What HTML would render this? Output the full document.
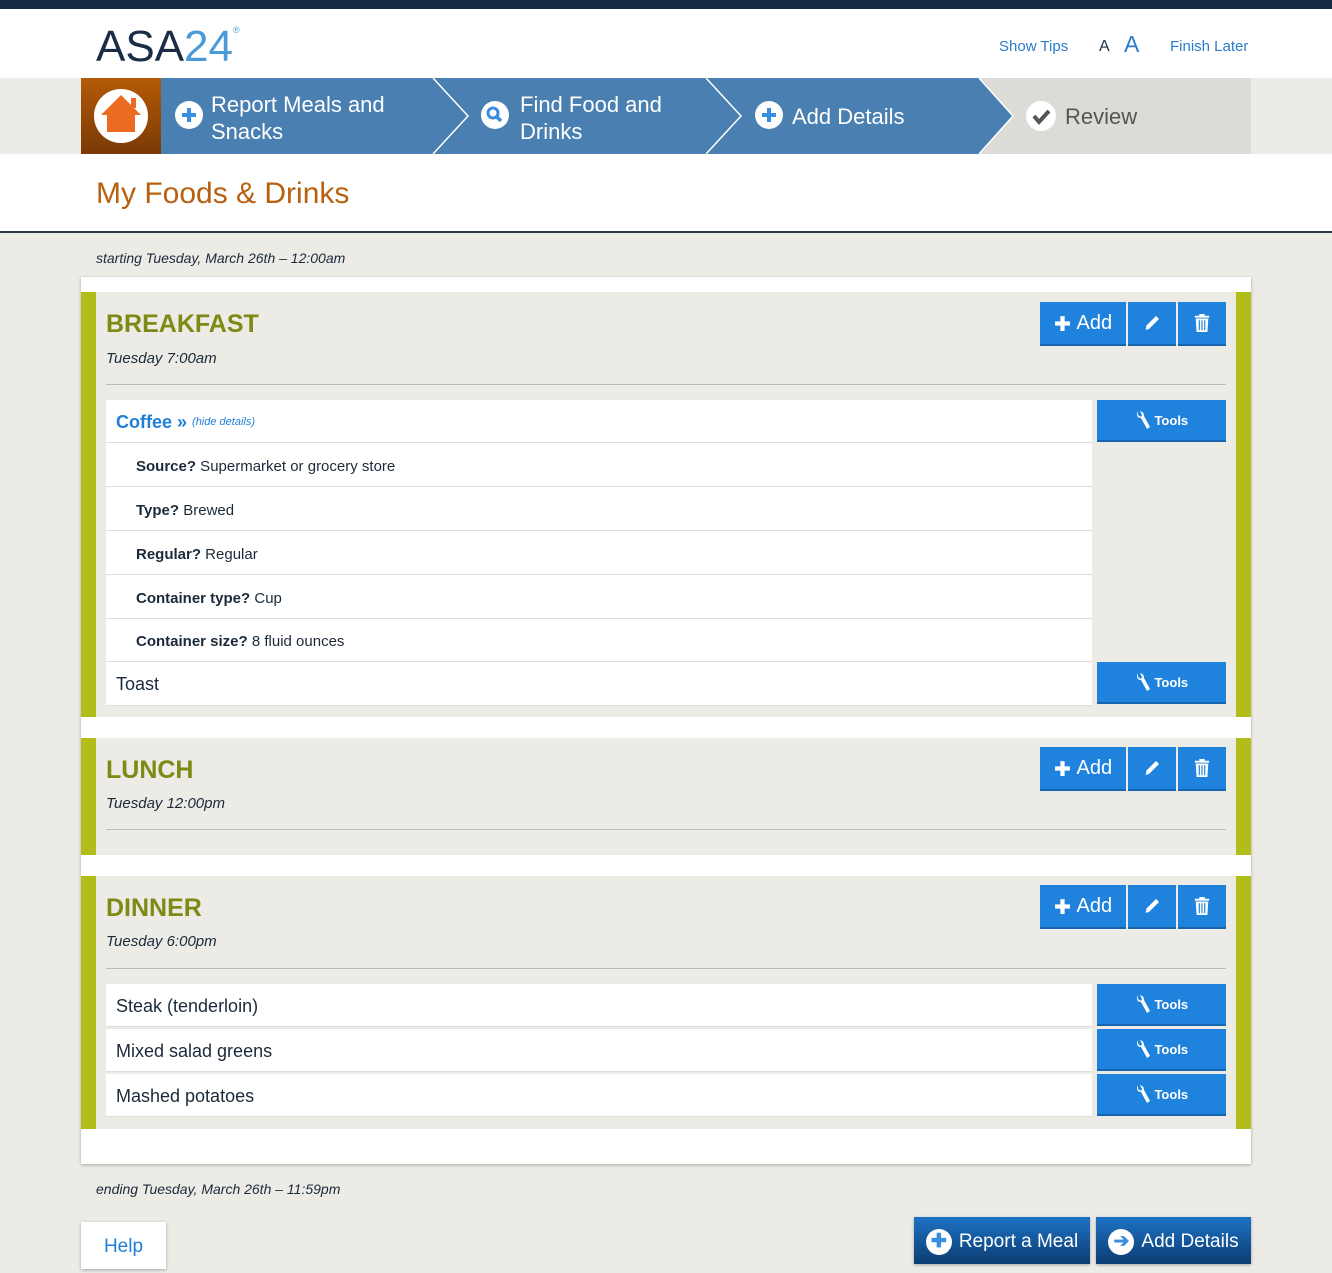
<!DOCTYPE html>
<html><head><meta charset="utf-8"><style>
*{margin:0;padding:0;box-sizing:border-box}
body{width:1332px;height:1273px;position:relative;overflow:hidden;background:#ecebe6;font-family:"Liberation Sans",sans-serif;color:#1b2a3a}
.a{position:absolute}
.btn{position:absolute;background:#1f83dd;color:#fff;border-bottom:2px solid #1665b0;display:flex;align-items:center;justify-content:center}
.sec{position:absolute;left:81px;width:1170px;background:#ecebe6;border-left:15px solid #b2bd19;border-right:15px solid #b2bd19}
.ttl{position:absolute;left:10px;font-size:25px;font-weight:bold;color:#7d8a14}
.dt{position:absolute;left:10px;font-size:15px;font-style:italic;color:#1b2a3a}
.hr{position:absolute;left:10px;width:1120px;height:1px;background:#bdbbb6}
.row{position:absolute;left:10px;width:986px;background:#fff;border-bottom:1px solid #ddd;font-size:18px;padding-left:10px;display:flex;align-items:center}
.det{position:absolute;left:10px;width:986px;background:#fff;border-bottom:1px solid #ddd;font-size:15px;padding-left:30px;display:flex;align-items:center}
.tools{position:absolute;left:1001px;width:129px;height:42px;font-size:13px;font-weight:bold}
.add{left:944px;width:86px;height:44px;font-size:20px}
.ed{left:1032px;width:48px;height:44px}
.tr{left:1082px;width:48px;height:44px}
</style></head><body>
<svg width="0" height="0" style="position:absolute"><defs>
<symbol id="wr" viewBox="0 0 16 20"><path d="M3 1 L3 5 L6 7 L7 5 L5 1 Q9 2 9 6 L15 17 L12 19 L6 8 Q2 8 2 4 Z" fill="#fff"/></symbol>
<symbol id="pen" viewBox="0 0 20 20"><path d="M3 17 L4 13 L14 3 L17 6 L7 16 Z" fill="#fff"/><path d="M3 17 L4 13" stroke="#1f83dd" stroke-width="1"/></symbol>
<symbol id="trash" viewBox="0 0 20 22"><path d="M7 1h6v2h5v2H2V3h5z" fill="#fff"/><path d="M3 6h14l-1 15H4z" fill="#fff"/><path d="M7 8v11M10 8v11M13 8v11" stroke="#1f83dd" stroke-width="1.3"/></symbol>
<symbol id="plus" viewBox="0 0 16 16"><path d="M8 1v14M1 8h14" stroke="#fff" stroke-width="4"/></symbol>
</defs></svg>
<div class="a" style="left:0;top:0;width:1332px;height:9px;background:#142a40"></div>
<div class="a" style="left:0;top:9px;width:1332px;height:69px;background:#fff"></div>
<div class="a" style="left:96px;top:22px;font-size:44px;letter-spacing:0px;color:#1a2d44">ASA<span style="color:#4a9ad8">24</span><sup style="font-size:9px;color:#4a9ad8;vertical-align:28px">®</sup></div>
<div class="a" style="left:999px;top:38px;font-size:15px;color:#2a7ccc">Show Tips</div>
<div class="a" style="left:1099px;top:38px;font-size:16px;color:#1a2d44">A</div>
<div class="a" style="left:1124px;top:31px;font-size:23px;color:#2a7ccc">A</div>
<div class="a" style="left:1170px;top:38px;font-size:15px;color:#2a7ccc">Finish Later</div>
<div class="a" style="left:0;top:78px;width:1332px;height:76px;background:#ecebe6"></div>
<svg class="a" style="left:81px;top:78px" width="1170" height="76">
<defs><linearGradient id="og" x1="0" y1="0" x2="0" y2="1"><stop offset="0" stop-color="#b35a06"/><stop offset="1" stop-color="#7a3a05"/></linearGradient></defs>
<rect x="0" y="0" width="80" height="76" fill="url(#og)"/>
<rect x="80" y="0" width="1090" height="76" fill="#dddbd7"/>
<polygon points="80,0 898,0 932,38 898,76 80,76" fill="#4a80b1"/>
<polyline points="352,0 387,38 352,76" fill="none" stroke="#fff" stroke-width="1.5"/>
<polyline points="625,0 660,38 625,76" fill="none" stroke="#fff" stroke-width="1.5"/>
<polyline points="898,0 932,38 898,76" fill="none" stroke="#fff" stroke-width="1.5"/>
<circle cx="40" cy="38" r="27" fill="#fff"/>
<polygon points="40,17 60,37 54,37 54,54 26,54 26,37 20,37" fill="#ec6b23"/>
<rect x="50" y="20" width="5" height="10" fill="#ec6b23"/>
<circle cx="108" cy="37" r="14" fill="#fff"/>
<path d="M108 30v14M101 37h14" stroke="#3a8ee0" stroke-width="4"/>
<circle cx="414" cy="37" r="14" fill="#fff"/>
<circle cx="412" cy="35" r="5" fill="none" stroke="#3a8ee0" stroke-width="3"/><path d="M415 38l5 5" stroke="#3a8ee0" stroke-width="3.5"/>
<circle cx="688" cy="37" r="14" fill="#fff"/>
<path d="M688 30v14M681 37h14" stroke="#3a8ee0" stroke-width="4"/>
<circle cx="960" cy="38" r="15" fill="#fff"/>
<path d="M953 38l5 6 10-11" fill="none" stroke="#555" stroke-width="4"/>
</svg>
<div class="a" style="left:211px;top:91px;font-size:22px;line-height:27px;color:#fff">Report Meals and<br>Snacks</div>
<div class="a" style="left:520px;top:91px;font-size:22px;line-height:27px;color:#fff">Find Food and<br>Drinks</div>
<div class="a" style="left:792px;top:104px;font-size:22px;color:#fff">Add Details</div>
<div class="a" style="left:1065px;top:104px;font-size:22px;color:#555">Review</div>
<div class="a" style="left:0;top:154px;width:1332px;height:79px;background:#fff;border-bottom:2px solid #2c3a48"></div>
<div class="a" style="left:96px;top:177px;font-size:30px;color:#b8600f">My Foods &amp; Drinks</div>
<div class="a" style="left:96px;top:250px;font-size:14px;font-style:italic">starting Tuesday, March 26th – 12:00am</div>
<div class="a" style="left:81px;top:277px;width:1170px;height:887px;background:#fff;box-shadow:0 1px 3px rgba(0,0,0,.3)"></div>

<div class="sec" style="top:292px;height:425px">
<div class="ttl" style="top:18px">BREAKFAST</div>
<div class="dt" style="top:58px">Tuesday 7:00am</div>
<div class="btn add" style="top:10px"><svg width="17" height="17"><use href="#plus"/></svg>&nbsp;Add</div><div class="btn ed" style="top:10px"><svg width="20" height="20"><use href="#pen"/></svg></div><div class="btn tr" style="top:10px"><svg width="18" height="20"><use href="#trash"/></svg></div>
<div class="hr" style="top:92px"></div>
<div class="row" style="top:108px;height:43px;color:#1f7fd6;font-weight:bold;padding-top:2px">Coffee »&nbsp;<span style="font-size:11px;font-style:italic;font-weight:normal">(hide details)</span></div>
<div class="btn tools" style="top:108px"><svg width="16" height="20"><use href="#wr"/></svg>&nbsp;Tools</div>
<div class="det" style="top:151px;height:44px;padding-top:3px"><b>Source?</b>&nbsp;Supermarket or grocery store</div>
<div class="det" style="top:195px;height:44px;padding-top:3px"><b>Type?</b>&nbsp;Brewed</div>
<div class="det" style="top:239px;height:44px;padding-top:3px"><b>Regular?</b>&nbsp;Regular</div>
<div class="det" style="top:283px;height:44px;padding-top:3px"><b>Container type?</b>&nbsp;Cup</div>
<div class="det" style="top:327px;height:43px;padding-top:3px"><b>Container size?</b>&nbsp;8 fluid ounces</div>
<div class="row" style="top:370px;height:44px;padding-top:2px">Toast</div>
<div class="btn tools" style="top:370px"><svg width="16" height="20"><use href="#wr"/></svg>&nbsp;Tools</div>
</div>

<div class="sec" style="top:738px;height:117px">
<div class="ttl" style="top:18px">LUNCH</div>
<div class="dt" style="top:57px">Tuesday 12:00pm</div>
<div class="btn add" style="top:9px"><svg width="17" height="17"><use href="#plus"/></svg>&nbsp;Add</div><div class="btn ed" style="top:9px"><svg width="20" height="20"><use href="#pen"/></svg></div><div class="btn tr" style="top:9px"><svg width="18" height="20"><use href="#trash"/></svg></div>
<div class="hr" style="top:91px"></div>
</div>

<div class="sec" style="top:876px;height:253px">
<div class="ttl" style="top:18px">DINNER</div>
<div class="dt" style="top:57px">Tuesday 6:00pm</div>
<div class="btn add" style="top:9px"><svg width="17" height="17"><use href="#plus"/></svg>&nbsp;Add</div><div class="btn ed" style="top:9px"><svg width="20" height="20"><use href="#pen"/></svg></div><div class="btn tr" style="top:9px"><svg width="18" height="20"><use href="#trash"/></svg></div>
<div class="hr" style="top:92px"></div>
<div class="row" style="top:108px;height:43px;padding-top:2px">Steak (tenderloin)</div><div class="btn tools" style="top:108px"><svg width="16" height="20"><use href="#wr"/></svg>&nbsp;Tools</div>
<div class="row" style="top:153px;height:43px;padding-top:2px">Mixed salad greens</div><div class="btn tools" style="top:153px"><svg width="16" height="20"><use href="#wr"/></svg>&nbsp;Tools</div>
<div class="row" style="top:198px;height:43px;padding-top:2px">Mashed potatoes</div><div class="btn tools" style="top:198px"><svg width="16" height="20"><use href="#wr"/></svg>&nbsp;Tools</div>
</div>

<div class="a" style="left:96px;top:1181px;font-size:14px;font-style:italic">ending Tuesday, March 26th – 11:59pm</div>
<div class="a" style="left:81px;top:1222px;width:85px;height:47px;background:#fff;box-shadow:0 1px 3px rgba(0,0,0,.3);color:#1f7fd6;font-size:19px;display:flex;align-items:center;justify-content:center;padding-top:2px">Help</div>
<div class="a" style="left:914px;top:1217px;width:176px;height:47px;background:linear-gradient(#1d72c4,#0c3d72);color:#fff;font-size:19px;display:flex;align-items:center;justify-content:center;box-shadow:0 1px 3px rgba(0,0,0,.3);padding-top:2px"><span style="display:inline-block;width:26px;height:26px;border-radius:50%;background:#fff;color:#3a8ee0;font-weight:bold;text-align:center;line-height:26px;margin-right:7px">✚</span>Report a Meal</div>
<div class="a" style="left:1096px;top:1217px;width:155px;height:47px;background:linear-gradient(#1d72c4,#0c3d72);color:#fff;font-size:19px;display:flex;align-items:center;justify-content:center;box-shadow:0 1px 3px rgba(0,0,0,.3);padding-top:2px"><span style="display:inline-block;width:26px;height:26px;border-radius:50%;background:#fff;color:#3a8ee0;font-weight:bold;text-align:center;line-height:26px;margin-right:7px">➔</span>Add Details</div>
</body></html>
